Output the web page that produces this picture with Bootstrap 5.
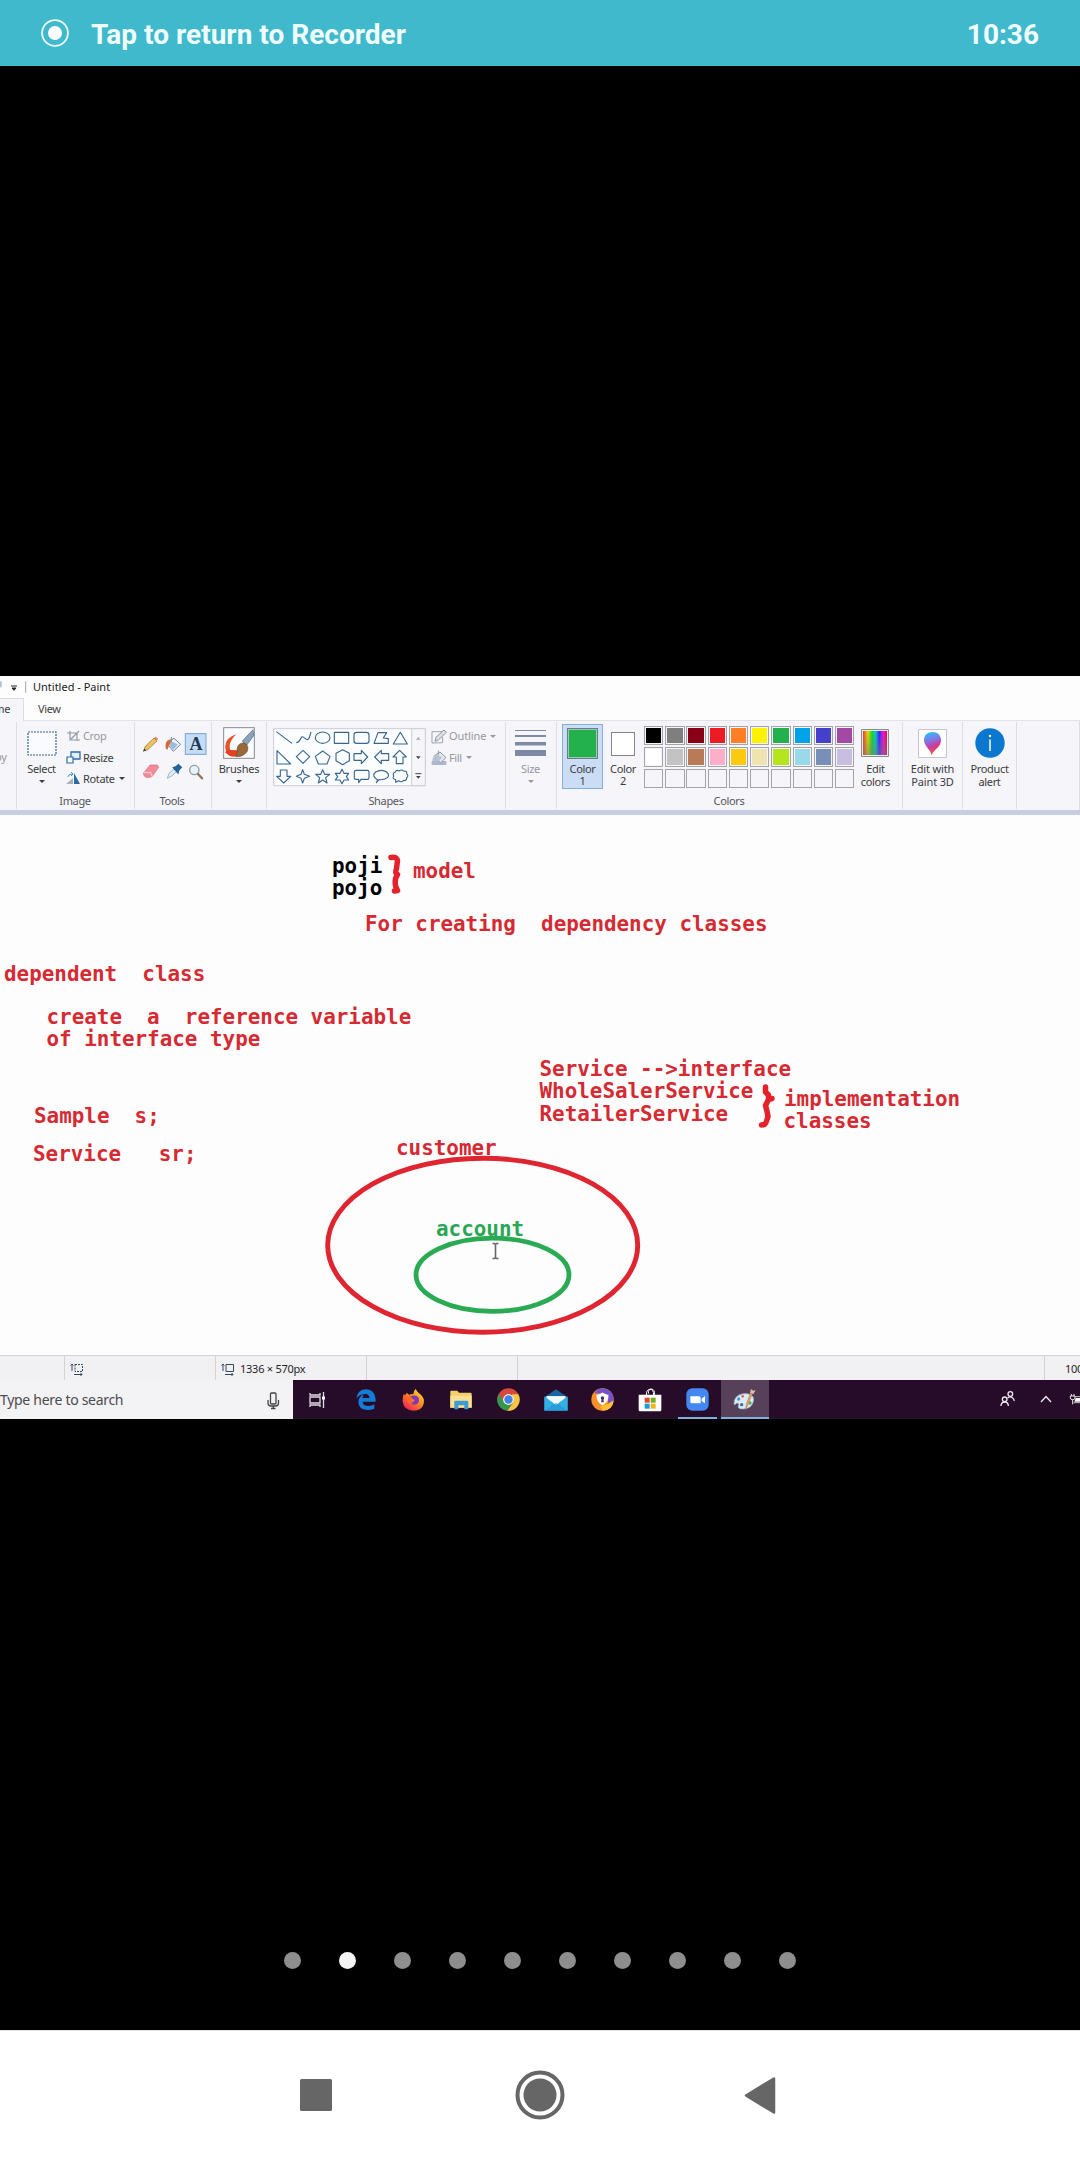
<!DOCTYPE html>
<html lang="en">
<head>
<meta charset="utf-8">
<meta name="viewport" content="width=device-width, initial-scale=1">
<title>Recorder</title>
<link href="https://cdn.jsdelivr.net/npm/bootstrap@5.3.0/dist/css/bootstrap.min.css" rel="stylesheet">
<style>
body{width:1080px;height:2160px;overflow:hidden;background:#000;font-family:"Noto Sans","Open Sans",sans-serif}
svg{display:block;flex:none}
.rec-bar{height:66px;background:#3fb9cb;color:#effdff;font:700 28px/66px Roboto,sans-serif;padding:0 41px 0 41px}
.rec-bar .rec-title{margin-left:22px;letter-spacing:.02px;padding-top:3px}
.rec-bar .rec-time{padding-top:3px}
.gap-top{height:610px}
.paint{height:743px;background:#fdfdfd;color:#3c3c40;font-size:11px;letter-spacing:-.35px;line-height:12.5px}
.p-title{height:22px;color:#222;letter-spacing:0}
.p-tabs{height:23px;background:#fdfdfd;border-bottom:1px solid #e3e3e6}
.p-home{width:24px;height:23px;background:#f6f5f9;border:1px solid #dcdce2;border-left:0;border-bottom:0;padding:4px 0 0 0}
.p-home span{display:block;width:10px;direction:rtl;white-space:nowrap}
.p-view{padding:5px 0 0 14px}
.ribbon{height:89px;background:#f6f5f9}
.rg{height:87px;border-right:1px solid #dedee4;padding-top:1px;margin-top:1px}
.rg-name{margin-top:auto;text-align:center;line-height:14px;padding-bottom:1px;color:#55555c}
.big{width:49px;text-align:center}
.big .ic{height:40px}
.caret{width:0;height:0;border:3px solid transparent;border-top-color:currentColor;border-bottom:0;margin:4px auto 0}
.rows{padding-top:3px}
.rows>div{height:21.2px;gap:2px}
.rows .caret{margin:0 0 0 2px}
.dim{color:#97979f}
.c1{width:41px;height:65px;background:#cbddf5;border:1px solid #86afe0;margin:1px 0 0 5px;text-align:center}
.c1 i{display:block;width:31px;height:31px;background:#22b14c;border:1px solid #6d7c84;box-shadow:inset 0 0 0 1px #9ac9b4;margin:3px auto 3.5px}
.c2{width:40px;text-align:center;padding-top:9px}
.c2 i{display:block;width:24px;height:24px;background:#fff;border:1px solid #85858a;margin:0 auto 6.5px}
.pal{display:grid;grid-template-columns:repeat(10,19.3px);grid-auto-rows:19.3px;gap:2.1px 1.95px;margin:3px 0 0 1px;height:63px}
.pal i{border:1px solid #a3a3a8;box-shadow:inset 0 0 0 1px #f6f5f9}
.rib-line{height:5px;background:#c8cee0}
.board{height:540px;background:#fdfdfd}
.board text{font:700 20.9px "DejaVu Sans Mono","Liberation Mono",monospace;white-space:pre;letter-spacing:0}
.p-stat{height:25px;background:#f1f0f3;border-top:1px solid #d4d4d8;color:#26262a}
.p-stat>div{border-right:1px solid #d3d3d7;height:24px;padding-top:2px}
.task{height:39px;background:#260c28;border-bottom:1px solid #1c1c26}
.find{width:293px;height:39px;padding-top:2px;background:#f3f2f4;color:#4b4b50;font-size:14px;letter-spacing:-.3px}
.tk{width:47.35px;height:39px;flex:none}
.open-app{box-shadow:inset 0 -2px #7db0dd}
.dots{gap:38px;padding-left:284px;height:17px;margin-top:533px}
.dots i{width:17px;height:17px;border-radius:50%;background:#8e8e8e}
.dots i.on{background:#f4f4f4}
.navi{height:131px;margin-top:60.5px;background:#fff;border-top:1px solid #e2e2e2}
</style>
<script src="https://cdn.jsdelivr.net/npm/bootstrap@5.3.0/dist/js/bootstrap.bundle.min.js"></script>
</head>
<body>
<header class="rec-bar d-flex align-items-center">
  <svg width="28" height="28" viewBox="0 0 28 28"><circle cx="14" cy="14" r="12.9" fill="none" stroke="#effdff" stroke-width="1.8"/><circle cx="14" cy="14" r="7" fill="#fff"/></svg>
  <span class="rec-title">Tap to return to Recorder</span><span class="rec-time ms-auto">10:36</span>
</header>
<div class="gap-top"></div>

<main class="paint overflow-hidden">
  <div class="p-title d-flex align-items-center">
    <svg width="33" height="22" viewBox="0 0 99 66"><path d="M0 16h5v18H0z" fill="#a9c0d0"/><path d="M33 30h18M36 36h12l-6 7z" stroke="#222" stroke-width="3" fill="#222"/><path d="M77 16v34" stroke="#777" stroke-width="2"/></svg><span>Untitled - Paint</span>
  </div>
  <div class="p-tabs d-flex"><div class="p-home"><span>me</span></div><div class="p-view">View</div></div>

  <div class="ribbon d-flex">
    <div class="rg d-flex flex-column" style="width:17px"><div class="dim" style="padding-top:28px;margin-left:-5px">py</div></div>

    <div class="rg d-flex flex-column" style="width:118px">
      <div class="d-flex">
        <div class="big"><div class="ic d-flex align-items-center justify-content-center"><svg width="30" height="25" viewBox="0 0 30 25"><rect x="1" y="1" width="28" height="23" fill="#f9fbff" stroke="#2f6690" stroke-width="1.2" stroke-dasharray="2 1"/></svg></div>Select<div class="caret"></div></div>
        <div class="rows">
          <div class="d-flex align-items-center dim"><svg width="15" height="13" viewBox="0 0 15 13"><path d="M1 3h10v8M4 1v9h10M5 9l8-8" fill="none" stroke="#929aa5" stroke-width="1.2"/></svg>Crop</div>
          <div class="d-flex align-items-center"><svg width="15" height="13" viewBox="0 0 15 13"><path d="M5 1h9v7H5z" fill="#dff0fb" stroke="#2c6ea6" stroke-width="1.3"/><path d="M1 6h6v6H1z" fill="#fff" stroke="#2c6ea6" stroke-width="1.2"/></svg>Resize</div>
          <div class="d-flex align-items-center"><svg width="15" height="13" viewBox="0 0 15 13"><path d="M8 1l6 11H8z" fill="#286b9c"/><path d="M0 12l7-6v6z" fill="#a9b0b8"/><path d="M2 5q0-3 4-3M5 0l2 2-2 2" fill="none" stroke="#4793c5"/></svg>Rotate <div class="caret"></div></div>
        </div>
      </div>
      <div class="rg-name" style="padding-right:1px">Image</div>
    </div>

    <div class="rg d-flex flex-column" style="width:77px">
      <svg class="ms-1" style="margin-top:8px" width="70" height="53" viewBox="417 182 210 159">
        <rect x="556" y="190" width="62" height="62" fill="#c6dcf5" stroke="#72a4d8" stroke-width="3"/>
        <text x="588" y="238" text-anchor="middle" font-family="Liberation Serif,serif" font-weight="700" font-size="54" fill="#203a58">A</text>
        <path d="M430 243l6-15 26-25 9 9-27 25z" fill="#f2c253" stroke="#7e6a45" stroke-width="2"/><path d="M462 203l6-4 6 6-4 7z" fill="#e97a67"/><path d="M430 243l3-8 6 5z" fill="#333"/>
        <path d="M500 218l22-14 20 18-22 21z" fill="#e9f0f6" stroke="#6d8ba6" stroke-width="3"/><path d="M503 215q10-6 30 8l-14 16z" fill="#9abcd9"/><path d="M498 236q-5-24 10-28l8-2-8 18-6 14z" fill="#dd6436"/><path d="M514 200v16" stroke="#7790a5" stroke-width="3"/>
        <path d="M430 309l20-25h22l4 7-20 28q-24 8-26-10z" fill="#f18b98" stroke="#d96878" stroke-width="2"/><path d="M431 306l21 1 5 13" fill="none" stroke="#fac6cc" stroke-width="4"/>
        <path d="M502 324l5-15 18-16 8 8-18 16z" fill="#dcecf6" stroke="#8298ab" stroke-width="2"/><path d="M520 292l7-2 8-7 9 8-8 9-2 8z" fill="#24649d" stroke="#24649d" stroke-width="4"/>
        <circle cx="583" cy="299" r="14" fill="#e7f2fa" stroke="#9199a2" stroke-width="4"/><path d="M594 311l12 13" stroke="#8f7557" stroke-width="7" stroke-linecap="round"/>
      </svg>
      <div class="rg-name" style="padding-right:2px">Tools</div>
    </div>

    <div class="rg" style="width:55px"><div class="big mx-auto"><div class="ic d-flex align-items-center justify-content-center"><svg width="32" height="32" viewBox="0 0 96 96"><rect x="2" y="2" width="92" height="92" fill="#fafcff" stroke="#898994" stroke-width="3"/><path d="M40 22Q0 34 8 70q10 30 42 12-30 2-30-22 0-20 20-38z" fill="#e7532d"/><path d="M6 76q20 20 46 8l-12-14-26-2z" fill="#e7421f"/><path d="M90 8L58 42l12 14L92 26z" fill="#8aa2bc" stroke="#4c6684" stroke-width="2"/><path d="M42 66q4-20 22-18 16 8 8 26-14 18-34 14 6-8 4-22z" fill="#97683a" stroke="#6e4b2b" stroke-width="2"/></svg></div><span style="letter-spacing:-.2px">Brushes</span><div class="caret"></div></div></div>

    <div class="rg d-flex flex-column" style="width:239px">
      <div class="d-flex">
        <svg style="margin:5px 0 0 6px" width="153" height="59" viewBox="38 54 459 177">
          <path d="M40 56h455v171H40z" fill="#fbfdff" stroke="#cdced6" stroke-width="3"/><path d="M454 56h41v171h-41z" fill="#f6f5f9" stroke="#cdced6" stroke-width="3"/>
          <g fill="none" stroke="#39668e" stroke-width="3.4" stroke-linejoin="round">
            <path d="M48 65l47 35M108 98c14 0 12-24 22-16s14 16 22-16"/><ellipse cx="187" cy="83" rx="22" ry="17"/><path d="M222 67h43v33h-43z"/><rect x="281" y="67" width="45" height="33" rx="8"/><path d="M353 68h26l-10 16 15 2v14h-43zM420 67l21 35h-42z"/>
            <path d="M50 122v40h41zM128 121l20 19-20 20-20-20zM187 123l22 16-9 23h-26l-9-23zM247 119l20 11v22l-20 12-20-12v-22zM281 131h22v-10l19 20-19 20v-10h-22zM385 131h-22v-10l-20 20 20 20v-10h22zM418 121l20 20h-10v20h-20v-20h-10z"/>
            <path d="M60 180h20v19h11l-21 20-21-20h11zM127 179l5 14 16 6-16 6-5 14-5-14-14-6 14-6zM187 179l6 14h15l-12 10 4 16-13-9-13 9 4-16-12-10h15zM245 178l6 12h14l-7 10 7 10h-14l-6 11-6-11h-14l7-10-7-10h14zM287 181h34q5 0 5 5v17q0 5-5 5h-19l-7 10v-10h-8q-5 0-5-5v-17q0-5 5-5zM352 210q-20-12-6-24 17-10 33 0 14 14-6 21-9 3-17 2l-8 9zM404 187q4-9 12-4 8-6 13 0 12-1 10 8 7 6 0 12 0 10-9 8-8 8-15 1l-9 5v-8q-11-3-6-11-4-8 4-11z"/>
          </g>
          <path d="M467 89h14l-7-8z" fill="#aaa"/><path d="M467 139h14l-7 8zM467 198h14l-7 8z" fill="#444"/><path d="M465 191h18" stroke="#444" stroke-width="3"/>
        </svg>
        <div class="rows dim" style="margin-left:5px">
          <div class="d-flex align-items-center"><svg width="16" height="15" viewBox="0 0 48 45"><path d="M34 8H3v34l32-1V24" fill="none" stroke="#a0a5b0" stroke-width="3"/><path d="M12 37l3-12L39 3l7 7-24 23z" fill="#dfe1e8" stroke="#8e949f" stroke-width="3"/></svg><span style="letter-spacing:-.1px">Outline</span> <div class="caret"></div></div>
          <div class="d-flex align-items-center"><svg width="16" height="16" viewBox="0 0 48 48"><path d="M2 33h44v12H2z" fill="#aeb7cb"/><path d="M9 18L27 6l18 17-17 16z" fill="#e6e8ef" stroke="#8f98ab" stroke-width="3"/><path d="M4 33q2-22 15-17l14 6-9 12z" fill="#b8c1d2"/><path d="M22 2v14" stroke="#8f98ab" stroke-width="3"/></svg>Fill <div class="caret"></div></div>
        </div>
      </div>
      <div class="rg-name">Shapes</div>
    </div>

    <div class="rg" style="width:51px"><div class="big dim"><div class="ic d-flex align-items-center justify-content-center"><svg width="31" height="28" viewBox="0 0 31 28"><path d="M0 1h31v1H0zM0 6h31v2H0zM0 13h31v3.6H0zM0 21h31v6H0z" fill="#7e8aa5"/></svg></div>Size<div class="caret"></div></div></div>

    <div class="rg d-flex flex-column" style="width:346px">
      <div class="d-flex">
        <div class="c1"><i></i>Color<br>1</div>
        <div class="c2"><i></i>Color<br>2</div>
        <div class="pal">
          <i style="background:#000"></i><i style="background:#7f7f7f"></i><i style="background:#880015"></i><i style="background:#ed1c24"></i><i style="background:#ff7f27"></i><i style="background:#fff200"></i><i style="background:#22b14c"></i><i style="background:#00a2e8"></i><i style="background:#4540cc"></i><i style="background:#a349a4"></i>
          <i style="background:#fff"></i><i style="background:#c3c3c3"></i><i style="background:#b97a57"></i><i style="background:#ffaec9"></i><i style="background:#ffc90e"></i><i style="background:#efe4b0"></i><i style="background:#b5e61d"></i><i style="background:#99d9ea"></i><i style="background:#7890b8"></i><i style="background:#c8bfe0"></i>
          <i></i><i></i><i></i><i></i><i></i><i></i><i></i><i></i><i></i><i></i>
        </div>
        <div class="big" style="width:42px"><div class="ic d-flex align-items-center justify-content-center"><svg width="28" height="28" viewBox="0 0 28 28"><defs><linearGradient id="hue"><stop offset="0" stop-color="#f33"/><stop offset=".2" stop-color="#dd0"/><stop offset=".38" stop-color="#1d2"/><stop offset=".52" stop-color="#0cc"/><stop offset=".68" stop-color="#32f"/><stop offset=".84" stop-color="#e1d"/><stop offset="1" stop-color="#f03"/></linearGradient><linearGradient id="dk" x2="0" y2="1"><stop offset="0" stop-color="#777" stop-opacity="0"/><stop offset="1" stop-color="#777" stop-opacity=".55"/></linearGradient></defs><path d="M.5.5h27v27H.5z" fill="#eee" stroke="#8b8b8b"/><path d="M2 2h24v24H2z" fill="url(#hue)"/><path d="M2 2h24v24H2z" fill="url(#dk)"/></svg></div>Edit<br>colors</div>
      </div>
      <div class="rg-name" style="padding-right:1px">Colors</div>
    </div>

    <div class="rg" style="width:60px"><div class="big w-100"><div class="ic d-flex align-items-center justify-content-center"><svg width="29" height="29" viewBox="0 0 29 29"><defs><linearGradient id="p3" x1=".2" x2=".4" y2="1"><stop offset="0" stop-color="#28c4ef"/><stop offset=".35" stop-color="#7b7de6"/><stop offset=".65" stop-color="#c43cae"/><stop offset="1" stop-color="#f0682b"/></linearGradient></defs><path d="M.5.5h28v28H.5z" fill="#fff" stroke="#c5c5cc"/><path d="M14.5 3c5 0 8.500 3 8.500 8 0 7-6 8-9.500 15-.5-5-7.500-9-7.500-15 0-5 3.500-8 8.500-8z" fill="url(#p3)"/><path d="M16 15q5-1 6-6 2 7-4 11-3 2-5 6z" fill="#e8356a" opacity=".5"/></svg></div><span style="letter-spacing:-.15px">Edit with</span><br><span style="letter-spacing:-.15px">Paint 3D</span></div></div>
    <div class="rg" style="width:54px"><div class="big w-100"><div class="ic d-flex align-items-center justify-content-center"><svg width="30" height="30" viewBox="0 0 30 30"><circle cx="15" cy="15" r="14.7" fill="#0b78d0"/><path d="M15 11.500V23" stroke="#fff" stroke-width="1.500"/><circle cx="15" cy="8" r="1.200" fill="#fff"/></svg></div>Product<br>alert</div></div>
    <div class="flex-fill" style="border-right:1px solid #dedee4"></div>
  </div>
  <div class="rib-line"></div>

  <div class="board">
    <svg width="1080" height="540" viewBox="0 815 1080 540">
      <g fill="#000"><text x="332" y="872.500">poji</text><text x="332" y="895">pojo</text></g>
      <g fill="#d62a33">
        <text x="413" y="877.500">model</text><text x="365" y="930.500">For creating  dependency classes</text>
        <text x="4" y="981">dependent  class</text><text x="46.500" y="1023.500">create  a  reference variable</text><text x="46.500" y="1046">of interface type</text>
        <text x="34" y="1123">Sample  s;</text><text x="33" y="1161">Service   sr;</text>
        <text x="539.500" y="1075.500">Service --&gt;interface</text><text x="539.500" y="1098">WholeSalerService</text><text x="539.500" y="1120.500">RetailerService</text>
        <text x="784" y="1106">implementation</text><text x="783.500" y="1128">classes</text><text x="396" y="1155">customer</text>
      </g>
      <text x="436" y="1236" fill="#2ba654">account</text>
      <g fill="none" stroke="#e3222c" stroke-linecap="round" stroke-linejoin="round">
        <path d="M391 857.500q6-1 6.500 3l-1 8q-2 5 1 6l-2 4q-1 6 1 10l1 2-3 .5" stroke-width="5.500"/>
        <path d="M765.500 1087v5l3 3v4l3.500-.5-3.500 1-3 6q2 7 2.500 11-2 7-3.500 8l-3 .5" stroke-width="5.500"/>
        <ellipse cx="482.700" cy="1245.200" rx="155" ry="87" stroke="#df2530" stroke-width="4.900"/>
      </g>
      <ellipse cx="492.500" cy="1274.700" rx="76.500" ry="36.600" fill="none" stroke="#2aab53" stroke-width="4.800"/>
      <path d="M492.500 1243.500h2l1 1 1-1h2M495.500 1244v14M492.500 1258.500h2l1-1 1 1h2" fill="none" stroke="#666" stroke-width="1.600"/>
    </svg>
  </div>

  <div class="p-stat d-flex">
    <div style="width:65px"></div>
    <div class="d-flex align-items-center" style="width:151px;padding-left:5px"><svg width="14" height="13" viewBox="0 0 14 13"><path d="M2 1v7M.5 2.500L2 1l1.500 1.500M4 11.500h8M10.500 10l1.500 1.500-1.500 1.500" stroke="#36495f" fill="none"/><path d="M5 1.500h7.500v7H5z" fill="none" stroke="#36495f" stroke-dasharray="2 1"/></svg></div>
    <div class="d-flex align-items-center" style="width:151px;padding-left:5px;gap:5px"><svg width="14" height="13" viewBox="0 0 14 13"><path d="M2 1v7M.5 2.500L2 1l1.500 1.500M4 11.500h8M10.500 10l1.500 1.500-1.500 1.500M5 1.500h7.500v7H5z" stroke="#36495f" fill="none"/></svg><span style="letter-spacing:-.25px">1336 × 570px</span></div>
    <div style="width:151px"></div><div style="width:527px"></div>
    <div class="border-0 d-flex align-items-center text-nowrap" style="width:35px;padding-left:20px">100%</div>
  </div>

  <div class="task d-flex">
    <div class="find d-flex align-items-center"><span>Type here to search</span><svg class="ms-auto" style="margin-right:13px" width="13" height="18" viewBox="0 0 13 18"><rect x="3.500" y="1" width="5.500" height="11" rx="1" fill="none" stroke="#444" stroke-width="1.300"/><path d="M1 8v3q0 3 3 3h4.500q3 0 3-3V8M6.300 14v3M4 16.500h4.500" fill="none" stroke="#444" stroke-width="1.300"/></svg></div>
    <div class="tk d-flex align-items-center justify-content-center" style="width:49.500px"><svg width="17" height="16" viewBox="0 0 17 16"><path d="M1 1v2h10V1M1 15v-2h10v2M1 5h10v6H1zM14.500 0v16" fill="none" stroke="#e2dce4" stroke-width="1.300"/><path d="M13 4.500h3v3h-3z" fill="#fff"/></svg></div>
    <div class="tk d-flex align-items-center justify-content-center"><svg width="20" height="21" viewBox="0 0 60 63"><path d="M1 28Q5 1 31 1q28 1 28 37H20q1 13 18 13 10 0 17-5v13q-9 4-21 4Q7 61 7 38q1-15 17-22-4 5-5 11h22q-2-12-13-12Q13 15 1 28z" fill="#147bd6"/></svg></div>
    <div class="tk d-flex align-items-center justify-content-center"><svg width="23" height="23" viewBox="0 0 69 69"><defs><linearGradient id="fx" x1="1" x2=".2" y2="1"><stop offset="0" stop-color="#ffe93c"/><stop offset=".5" stop-color="#ff8a20"/><stop offset="1" stop-color="#f0185c"/></linearGradient></defs><path d="M5 18l5 4 4-8 8 7q6-4 12-2-1-9 7-16 4 9 14 16 14 12 10 28-6 21-31 21Q6 67 2 42 1 29 5 18z" fill="url(#fx)"/><path d="M24 25q20-8 27 7 2 17-14 18-15 0-17-13 4 7 12 5 7-3 5-7-7 0-13-10z" fill="#8138b4"/><path d="M14 24q14 0 18 9-4 4-9 2 0 8 12 9-13 7-20-5z" fill="#ff6b1e"/></svg></div>
    <div class="tk d-flex align-items-center justify-content-center"><svg width="22" height="20" viewBox="0 0 66 60"><path d="M1 5q0-3 3-3h18l5 6h34q4 0 4 4v41H1z" fill="#f5cf69"/><path d="M1 17h64v36H1z" fill="#fbe08f"/><path d="M13 58V36q0-4 4-4h34q4 0 4 4v22H43V46H25v12z" fill="#3c9bd5"/></svg></div>
    <div class="tk d-flex align-items-center justify-content-center"><svg width="23" height="23" viewBox="0 0 66 66"><circle cx="33" cy="33" r="32" fill="#d6483b"/><path d="M5 17A32 32 0 0 0 30 65L46 41 20 41z" fill="#32984e"/><path d="M61 18A32 32 0 0 1 30 65L47 41 43 18z" fill="#f3c744"/><circle cx="33" cy="33" r="15.500" fill="#f6f2ee"/><circle cx="33" cy="33" r="12" fill="#4184e6"/></svg></div>
    <div class="tk d-flex align-items-center justify-content-center"><svg width="24" height="22" viewBox="0 0 72 66"><path d="M1 25L36 1l35 24v39H1z" fill="#1964a0"/><path d="M7 22h58v30H7z" fill="#f2faff"/><path d="M1 22l35 26 35-26v43H1z" fill="#35aee4"/><path d="M7 22h58L36 45z" fill="#f2faff"/><path d="M1 65l35-24 35 24z" fill="#198ed0" opacity=".5"/></svg></div>
    <div class="tk d-flex align-items-center justify-content-center"><svg width="23" height="23" viewBox="0 0 66 66"><circle cx="33" cy="33" r="32" fill="#f79028"/><path d="M29 1q35 0 36 35L50 45 45 17 10 15Q18 3 29 1z" fill="#7651cb"/><path d="M65 35q-2 28-31 30l-8-12 24-8z" fill="#ffc12f"/><path d="M33 13q9 7 17 6 2 22-17 31-19-9-17-31 8 1 17-6z" fill="#fff"/><circle cx="33" cy="29" r="5" fill="#443064"/><path d="M31 29h4l2 12h-8z" fill="#443064"/></svg></div>
    <div class="tk d-flex align-items-center justify-content-center"><svg width="24" height="24" viewBox="0 0 72 72"><path d="M25 21q0-17 11-17t11 17M31 17Q31 1 41 3q9 1 9 17" fill="none" stroke="#fff" stroke-width="3"/><path d="M2 20h68v46q0 4-4 4H6q-4 0-4-4z" fill="#fff"/><path d="M20 29h15v15H20z" fill="#d94b2c"/><path d="M38 29h15v15H38z" fill="#72ad23"/><path d="M20 47h15v15H20z" fill="#159fe0"/><path d="M38 47h15v15H38z" fill="#f6b31a"/></svg></div>
    <div class="tk px-1"><div class="open-app h-100 d-flex align-items-center justify-content-center"><svg width="23" height="23" viewBox="0 0 69 69"><rect x="1" y="1" width="67" height="67" rx="18" fill="#4287f2"/><path d="M13 25h26q5 0 5 5v16H18q-5 0-5-5zM47 32l10-8v22l-10-7z" fill="#fff"/></svg></div></div>
    <div class="tk open-app d-flex align-items-center justify-content-center" style="background-color:#56405a"><svg width="24" height="24" viewBox="0 0 72 72"><path d="M3 49Q1 22 31 17q31-2 31 19-4 26-31 27-19 0-15-10 4-9-5-7-5 5-8 3z" fill="#dceaf3" stroke="#8fb4ca" stroke-width="2"/><circle cx="17" cy="33" r="5" fill="#4698d8"/><circle cx="29" cy="25" r="4" fill="#e56046"/><circle cx="26" cy="50" r="5" fill="#3a6ea8"/><circle cx="51" cy="45" r="5" fill="#5cad50"/><path d="M37 67l3-20 12-32 6 3-13 33z" fill="#d7a168" stroke="#9b6a40"/><path d="M51 15l3-12 7 5 7-1-7 11z" fill="#e3bf95"/></svg></div>
    <div class="d-flex align-items-center ms-auto">
      <svg width="15" height="16" viewBox="0 0 45 48"><g fill="none" stroke="#eee5ef" stroke-width="4"><circle cx="14" cy="25" r="7"/><path d="M3 45q0-12 11-12t11 12"/><circle cx="31" cy="9" r="7"/><path d="M23 21q7-7 15 0 5 4 4 9"/></g></svg>
      <svg style="margin-left:25px" width="12" height="8" viewBox="0 0 12 8"><path d="M1 7l5-5.500L11 7" fill="none" stroke="#eee5ef" stroke-width="1.400"/></svg>
      <svg style="margin-left:17px" width="11" height="13" viewBox="0 0 33 39"><path d="M7 3v6M15 3v6M4 9h14v6q0 5-7 5t-7-5zM11 20v14" fill="none" stroke="#eee5ef" stroke-width="3"/><path d="M18 11h15M14 29h19" stroke="#eee5ef" stroke-width="2.500"/><path d="M20 15h13v11H16z" fill="#fff"/></svg>
    </div>
  </div>
</main>

<div class="dots d-flex"><i></i><i class="on"></i><i></i><i></i><i></i><i></i><i></i><i></i><i></i><i></i></div>

<nav class="navi d-flex align-items-center justify-content-between" style="padding:0 304px 1px 300px">
  <svg width="32" height="32"><rect width="32" height="32" rx="1.500" fill="#666"/></svg>
  <svg width="50" height="50" viewBox="0 0 50 50" style="margin-right:-3px"><circle cx="25" cy="25" r="22.500" fill="none" stroke="#666" stroke-width="4"/><circle cx="25" cy="25" r="16.500" fill="#666"/></svg>
  <svg width="32" height="37" viewBox="0 0 32 37"><path d="M2 18.500L30 1.500v34z" fill="#666" stroke="#666" stroke-width="2.500" stroke-linejoin="round"/></svg>
</nav>
</body>
</html>
